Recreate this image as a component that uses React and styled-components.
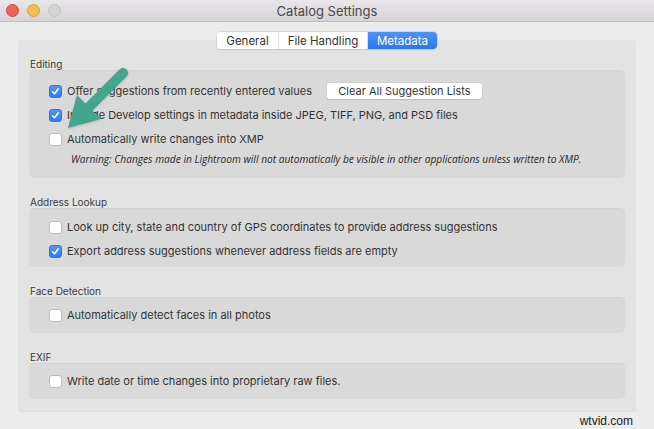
import React from "react";
import styled, { createGlobalStyle } from "styled-components";

const GlobalStyle = createGlobalStyle`
  html, body {
    margin: 0;
    padding: 0;
    background: #ececec;
  }
  body {
    font-family: Inter, "Liberation Sans", Arial, sans-serif;
    color: #333;
  }
`;

const SECTIONS = [
  {
    title: "Editing",
    top: 9,
    bottom: 0,
    rows: [
      { label: "Offer suggestions from recently entered values", checked: true, button: "Clear All Suggestion Lists" },
      { label: "Include Develop settings in metadata inside JPEG, TIFF, PNG, and PSD files", checked: true },
      { label: "Automatically write changes into XMP", checked: false },
    ],
    warning:
      "Warning: Changes made in Lightroom will not automatically be visible in other applications unless written to XMP.",
  },
  {
    title: "Address Lookup",
    top: 7,
    bottom: 4,
    rows: [
      { label: "Look up city, state and country of GPS coordinates to provide address suggestions", checked: false },
      { label: "Export address suggestions whenever address fields are empty", checked: true },
    ],
  },
  {
    title: "Face Detection",
    top: 6,
    bottom: 6,
    rows: [{ label: "Automatically detect faces in all photos", checked: false }],
  },
  {
    title: "EXIF",
    top: 6,
    bottom: 6,
    rows: [{ label: "Write date or time changes into proprietary raw files.", checked: false }],
  },
];

const TABS = [
  { name: "General", width: 61 },
  { name: "File Handling", width: 89 },
  { name: "Metadata", width: 70 },
];

export default function App() {
  return (
    <>
      <GlobalStyle />
      <Window>
        <TitleBar>
          <Lights>
            <Light $color="#ec6559" $border="#d5493f" />
            <Light $color="#f5bf4f" $border="#d8a03a" />
            <Light $color="#d3d3d3" $border="#c2c2c2" />
          </Lights>
          <Title>Catalog Settings</Title>
          <span />
        </TitleBar>

        <Content>
          <Tabs>
            {TABS.map((t) => (
              <Tab key={t.name} $w={t.width} $active={t.name === "Metadata"}>
                {t.name}
              </Tab>
            ))}
          </Tabs>

          <Panel>
            {SECTIONS.map((s) => (
              <Section key={s.title}>
                <SectionLabel>{s.title}</SectionLabel>
                <Group $top={s.top} $bottom={s.bottom}>
                  {s.rows.map((r) => (
                    <Row key={r.label}>
                      <Checkbox $checked={r.checked}>
                        {r.checked && (
                          <svg width="9" height="9" viewBox="0 0 9 9">
                            <path
                              d="M1.6 4.8 L3.6 6.8 L7.4 1.8"
                              fill="none"
                              stroke="#fff"
                              strokeWidth="1.6"
                              strokeLinecap="round"
                              strokeLinejoin="round"
                            />
                          </svg>
                        )}
                      </Checkbox>
                      <RowText>{r.label}</RowText>
                      {r.button && <PushButton>{r.button}</PushButton>}
                    </Row>
                  ))}
                  {s.warning && <Warning>{s.warning}</Warning>}
                </Group>
              </Section>
            ))}
          </Panel>

          <Watermark>wtvid.com</Watermark>
        </Content>

        <Arrow width="654" height="429" viewBox="0 0 654 429">
          <path
            d="M126.5 76.5 L92.5 110.5 L101 119 L68 128 L77 95 L85.5 103.5 L119.5 69.5 Q123 66 126.5 69.5 Q130 73 126.5 76.5 Z"
            fill="#43a58b"
          />
        </Arrow>
      </Window>
    </>
  );
}

const Window = styled.div`
  position: relative;
  width: 654px;
  height: 429px;
  overflow: hidden;
  background: #ececec;
  display: flex;
  flex-direction: column;
`;

const TitleBar = styled.div`
  height: 21px;
  flex: none;
  display: grid;
  grid-template-columns: 1fr auto 1fr;
  align-items: center;
  background: linear-gradient(#e9e7e9, #d5d3d5);
  border-bottom: 1px solid #bdbdbd;
`;

const Lights = styled.div`
  display: flex;
  gap: 8px;
  padding-left: 6px;
`;

const Light = styled.span`
  width: 11px;
  height: 11px;
  border-radius: 50%;
  background: ${(p) => p.$color};
  border: 0.5px solid ${(p) => p.$border};
`;

const Title = styled.div`
  font-size: 13px;
  color: #4a4a4a;
`;

const Content = styled.div`
  flex: 1;
  display: flex;
  flex-direction: column;
  padding-top: 10px;
`;

const Tabs = styled.div`
  position: relative;
  z-index: 1;
  align-self: flex-start;
  margin-left: 217px;
  display: flex;
  height: 17px;
  border-radius: 4px;
  background: #fff;
  box-shadow: 0 0 0 0.5px #c4c4c4, 0 1px 1px rgba(0, 0, 0, 0.12);
  overflow: hidden;
`;

const Tab = styled.div`
  width: ${(p) => p.$w}px;
  box-sizing: border-box;
  display: flex;
  align-items: center;
  justify-content: center;
  font-size: 11.5px;
  color: ${(p) => (p.$active ? "#fff" : "#333")};
  background: ${(p) => (p.$active ? "linear-gradient(#4a94f7, #2d76ec)" : "#fff")};
  & + & {
    border-left: 1px solid #e0e0e0;
  }
`;

const Panel = styled.div`
  margin: -9px 18px 0;
  padding: 19px 11px 12px;
  background: #e3e3e3;
  border-radius: 4px;
  border-bottom: 1px solid #dcdcdc;
  display: flex;
  flex-direction: column;
`;

const Section = styled.div`
  display: flex;
  flex-direction: column;
  & + & {
    margin-top: 19px;
  }
`;

const SectionLabel = styled.div`
  font-size: 10px;
  line-height: 11px;
  color: #3a3a3a;
  padding-left: 1px;
`;

const Group = styled.div`
  background: #d9d9d9;
  border-radius: 5px;
  border-top: 1px solid #d2d2d2;
  padding: ${(p) => p.$top - 1}px 20px ${(p) => p.$bottom}px;
  display: flex;
  flex-direction: column;
`;

const Row = styled.div`
  height: 24px;
  display: flex;
  align-items: center;
`;

const Checkbox = styled.span`
  width: 13px;
  height: 13px;
  box-sizing: border-box;
  border-radius: 3px;
  display: flex;
  align-items: center;
  justify-content: center;
  flex: none;
  background: ${(p) => (p.$checked ? "linear-gradient(#4c96f7, #2f78ee)" : "#fff")};
  border: 1px solid ${(p) => (p.$checked ? "#2d74e4" : "#bcbcbc")};
`;

const RowText = styled.span`
  margin-left: 5px;
  font-size: 11px;
  color: #333;
  white-space: nowrap;
`;

const PushButton = styled.button`
  margin-left: 15px;
  height: 16px;
  width: 155px;
  padding: 0;
  border: none;
  border-radius: 3px;
  background: #fff;
  box-shadow: 0 0 0 0.5px #c4c4c4, 0 1px 1px rgba(0, 0, 0, 0.15);
  font-family: inherit;
  font-size: 11px;
  color: #333;
  white-space: nowrap;
`;

const Warning = styled.div`
  padding: 0 0 11px 22px;
  height: 16px;
  line-height: 16px;
  font-family: "Open Sans", "Liberation Sans", sans-serif;
  font-style: italic;
  font-size: 10.2px;
  color: #2a2a2a;
  white-space: nowrap;
`;

const Watermark = styled.div`
  text-align: right;
  padding-right: 21px;
  line-height: 18px;
  font-family: "Liberation Sans", Arial, sans-serif;
  font-size: 12px;
  color: #1a1a1a;
`;

const Arrow = styled.svg`
  position: absolute;
  left: 0;
  top: 0;
  pointer-events: none;
  filter: drop-shadow(0 1px 1px rgba(0, 0, 0, 0.15));
`;
